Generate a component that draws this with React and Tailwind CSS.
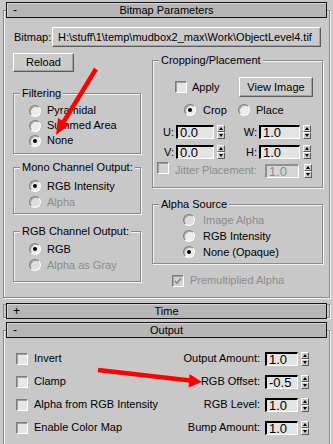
import React from 'react';

// 3ds Max style "Bitmap Parameters" rollout
const DIS = 'text-[#8c8c8c]';

function Header({ title, sign, className = '' }) {
    return (
        <div className={`mx-[2px] h-[16px] grid grid-cols-[24px_1fr_24px] items-center border border-[#161616] bg-[#b6b6b6] shadow-[inset_1px_1px_0_#d6d6d6] ${className}`}>
            <span className="pl-[6px] leading-none text-[12px]">{sign}</span>
            <span className="text-center leading-none">{title}</span>
            <span />
        </div>
    );
}

function Btn({ className = '', children }) {
    return (
        <div className={`flex items-center bg-[#cbcbcb] border border-t-white border-l-white border-r-[#5c5c5c] border-b-[#5c5c5c] shadow-[inset_-1px_-1px_0_#a2a2a2] ${className}`}>
            {children}
        </div>
    );
}

function Group({ label, className = '', body = '', children }) {
    return (
        <div className={`border border-[#8a8a8a] shadow-[inset_1px_1px_0_#f4f4f4,1px_1px_0_#f4f4f4] ${className}`}>
            <div className="-mt-[7px] ml-[6px] w-fit px-[2px] bg-[#c8c8c8] leading-[13px]">{label}</div>
            <div className={body}>{children}</div>
        </div>
    );
}

function Radio({ on, off }) {
    return (
        <span className={`flex items-center justify-center w-[12px] h-[12px] shrink-0 rounded-full border border-t-[#7c7c7c] border-l-[#7c7c7c] border-r-white border-b-white shadow-[inset_1px_1px_0_#a8a8a8] ${off ? 'bg-[#dedede]' : 'bg-[#ececec]'}`}>
            {on && <span className="w-[4px] h-[4px] rounded-full bg-black" />}
        </span>
    );
}

function RadioRow({ label, on, off, pad = 'pl-[15px]', gap = 'ml-[6px]', h = 'h-[16px]' }) {
    return (
        <div className={`flex items-center ${h} ${pad}`}>
            <Radio on={on} off={off} />
            <span className={`${gap} ${off ? DIS : ''}`}>{label}</span>
        </div>
    );
}

function Check({ on, off, className = '' }) {
    return (
        <span className={`flex items-center justify-center w-[12px] h-[12px] shrink-0 border border-t-[#7c7c7c] border-l-[#7c7c7c] border-r-white border-b-white shadow-[inset_1px_1px_0_#a0a0a0] ${off ? 'bg-[#d2d2d2]' : 'bg-[#e6e6e6]'} ${className}`}>
            {on && (
                <svg width="8" height="8" viewBox="0 0 8 8">
                    <path d="M1 4l2 2.2L7 1.2" fill="none" stroke={off ? '#8a8a8a' : '#000'} strokeWidth="1.6" />
                </svg>
            )}
        </span>
    );
}

function Field({ value, w, off, className = '' }) {
    return (
        <span className={`flex items-center h-[14px] ${w} pl-[2px] text-[13px] leading-none border-t-2 border-l-2 border-r border-b ${off ? 'border-t-[#909090] border-l-[#909090] bg-[#d6d6d6] text-[#8c8c8c]' : 'border-t-black border-l-black bg-[#e4e4e4]'} border-r-white border-b-white ${className}`}>
            {value}
        </span>
    );
}

function Spin({ className = '' }) {
    const half = 'flex-1 flex items-center justify-center bg-[#cdcdcd] border border-t-white border-l-white border-r-[#5c5c5c] border-b-[#5c5c5c]';
    return (
        <span className={`flex flex-col w-[8px] h-[14px] shrink-0 ${className}`}>
            <span className={half}>
                <svg width="4" height="3" viewBox="0 0 4 3"><path d="M2 0L4 3H0z" fill="#000" /></svg>
            </span>
            <span className={half}>
                <svg width="4" height="3" viewBox="0 0 4 3"><path d="M0 0h4L2 3z" fill="#000" /></svg>
            </span>
        </span>
    );
}

function OutRow({ check, amount, value }) {
    return (
        <div className="flex items-center h-[23px] pl-[12px] pr-[20px]">
            <Check />
            <span className="ml-[6px]">{check}</span>
            <span className="ml-auto">{amount}</span>
            <Field value={value} w="w-[33px]" className="ml-[5px]" />
            <Spin className="ml-[3px]" />
        </div>
    );
}

export default function App() {
    return (
        <div className="relative w-[333px] h-[444px] overflow-hidden bg-[#c8c8c8] text-[11px] leading-[13px] text-black font-['Liberation_Sans',Arial,sans-serif] select-none">
            {/* Bitmap Parameters */}
            <div className="mt-[10px] mx-[3px] pb-[9px] border border-[#8a8a8a] shadow-[inset_1px_1px_0_#f4f4f4,1px_1px_0_#f4f4f4]">
                <Header title="Bitmap Parameters" sign="-" className="-mt-[9px]" />

                <div className="flex items-center mt-[9px] pl-[10px]">
                    <span className="w-[38px]">Bitmap:</span>
                    <Btn className="w-[269px] h-[20px] pl-[5px] whitespace-nowrap">
                        H:\stuff\1\temp\mudbox2_max\Work\ObjectLevel4.tif
                    </Btn>
                </div>

                <div className="flex items-start">
                    {/* left column */}
                    <div className="ml-[9px] mt-[6px] w-[128px] flex flex-col">
                        <Btn className="w-[61px] h-[19px] justify-center">Reload</Btn>

                        <Group label="Filtering" className="mt-[21px]" body="pt-[3px] pb-[5px]">
                            <RadioRow label="Pyramidal" h="h-[15px]" />
                            <RadioRow label="Summed Area" h="h-[15px]" />
                            <RadioRow label="None" on h="h-[15px]" />
                        </Group>

                        <Group label="Mono Channel Output:" className="mt-[13px]" body="pt-[4px] pb-[3px]">
                            <RadioRow label="RGB Intensity" on />
                            <RadioRow label="Alpha" off />
                        </Group>

                        <Group label="RGB Channel Output:" className="mt-[17px]" body="pt-[3px] pb-[8px]">
                            <RadioRow label="RGB" on />
                            <RadioRow label="Alpha as Gray" off />
                        </Group>
                    </div>

                    {/* right column */}
                    <div className="ml-[11px] mt-[13px] w-[171px] flex flex-col">
                        <Group label="Cropping/Placement" body="pt-[10px] pb-[9px]">
                            <div className="flex items-center h-[20px] pl-[22px]">
                                <Check />
                                <span className="ml-[5px]">Apply</span>
                                <Btn className="ml-auto mr-[9px] w-[74px] h-[20px] justify-center">View Image</Btn>
                            </div>
                            <div className="flex items-center h-[16px] mt-[5px] pl-[31px]">
                                <span className="flex items-center w-[54px]">
                                    <Radio on />
                                    <span className="ml-[7px]">Crop</span>
                                </span>
                                <Radio />
                                <span className="ml-[6px]">Place</span>
                            </div>
                            <div className="flex items-center h-[14px] mt-[7px] pl-[3px]">
                                <span className="w-[20px] text-right pr-[2px]">U:</span>
                                <Field value="0.0" w="w-[38px]" />
                                <Spin className="ml-[3px]" />
                                <span className="w-[34px] text-right pr-[2px]">W:</span>
                                <Field value="1.0" w="w-[41px]" />
                                <Spin className="ml-[3px]" />
                            </div>
                            <div className="flex items-center h-[14px] mt-[6px] pl-[3px]">
                                <span className="w-[20px] text-right pr-[2px]">V:</span>
                                <Field value="0.0" w="w-[38px]" />
                                <Spin className="ml-[3px]" />
                                <span className="w-[34px] text-right pr-[2px]">H:</span>
                                <Field value="1.0" w="w-[41px]" />
                                <Spin className="ml-[3px]" />
                            </div>
                            <div className="flex h-[16px] mt-[3px] pl-[4px] pr-[10px]">
                                <Check off className="self-start" />
                                <span className={`ml-[6px] self-center ${DIS}`}>Jitter Placement:</span>
                                <span className="ml-auto self-end flex items-center">
                                    <Field value="1.0" w="w-[34px]" off />
                                    <Spin className="ml-[5px]" />
                                </span>
                            </div>
                        </Group>

                        <Group label="Alpha Source" className="mt-[16px]" body="pt-[1px] pb-[3px]">
                            <RadioRow label="Image Alpha" off pad="pl-[30px]" gap="ml-[8px]" />
                            <RadioRow label="RGB Intensity" pad="pl-[30px]" gap="ml-[8px]" />
                            <RadioRow label="None (Opaque)" on pad="pl-[30px]" gap="ml-[8px]" />
                        </Group>

                        <div className="flex items-center h-[15px] mt-[9px] pl-[20px]">
                            <Check on off />
                            <span className={`ml-[6px] ${DIS}`}>Premultiplied Alpha</span>
                        </div>
                    </div>
                </div>
            </div>

            {/* Time (collapsed) */}
            <div className="mt-[6px] mx-[3px] h-[14px] flex items-center border border-[#8a8a8a] shadow-[1px_1px_0_#f4f4f4]">
                <div className="flex-1">
                    <Header title="Time" sign="+" />
                </div>
            </div>

            {/* Output */}
            <div className="mt-[12px] mx-[3px] pb-[20px] border border-[#8a8a8a] shadow-[inset_1px_1px_0_#f4f4f4,1px_1px_0_#f4f4f4]">
                <Header title="Output" sign="-" className="-mt-[9px]" />
                <div className="pt-[9px]">
                    <OutRow check="Invert" amount="Output Amount:" value="1.0" />
                    <OutRow check="Clamp" amount="RGB Offset:" value="-0.5" />
                    <OutRow check="Alpha from RGB Intensity" amount="RGB Level:" value="1.0" />
                    <OutRow check="Enable Color Map" amount="Bump Amount:" value="1.0" />
                </div>
            </div>

            {/* red annotation arrows */}
            <svg className="absolute left-0 top-0 pointer-events-none" width="333" height="444">
                <line x1="96" y1="69" x2="63" y2="123" stroke="#f00" strokeWidth="4.5" />
                <polygon points="56,135 69,125 58,118" fill="#f00" />
                <line x1="98" y1="370" x2="190" y2="380.6" stroke="#f00" strokeWidth="4.5" />
                <polygon points="202,382 189.5,374 188.5,387.5" fill="#f00" />
            </svg>
        </div>
    );
}
